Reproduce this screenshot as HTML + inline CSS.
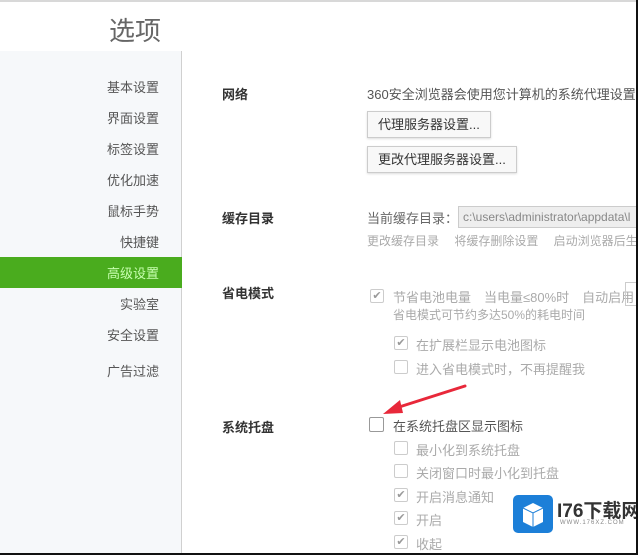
<!DOCTYPE html>
<html><head><meta charset="utf-8"><style>
*{margin:0;padding:0;box-sizing:border-box}
body{width:638px;height:555px;overflow:hidden;background:#fff;font-family:"Liberation Sans","Noto Sans CJK SC",sans-serif;position:relative;color:#333}
.a{position:absolute;white-space:nowrap}
.top{left:0;top:0;width:638px;height:3px;border-top:2px solid #d8d8d8}
.title{left:109px;top:11px;font-size:26px;color:#666}
.side{left:0;top:51px;width:182px;height:502px;background:#f6f8fa;border-right:1px solid #d0d0d0}
.nav{left:0;width:159px;text-align:right;font-size:13px;color:#555}
.sel{left:0;top:257px;width:182px;height:31px;background:#4aac1e}
.h{font-size:13px;font-weight:bold;color:#333;left:222px}
.t{font-size:13px;color:#444}
.f{color:#aaa;font-size:12px}
.btn{border:1px solid #ccc;background:#f8f8f8;font-size:13px;padding:0 10px;height:27px;line-height:26px;color:#333;box-shadow:0 1px 2px #ddd}
.cb{width:14px;height:14px;border:1px solid #ccc;border-radius:2px;background:#fff;font-size:11px;line-height:12px;text-align:center;color:#999}
</style></head><body>
<div class="a top"></div>
<div class="a title">选项</div>
<div class="a side"></div>
<div class="a nav" style="top:77px">基本设置</div>
<div class="a nav" style="top:108px">界面设置</div>
<div class="a nav" style="top:139px">标签设置</div>
<div class="a nav" style="top:170px">优化加速</div>
<div class="a nav" style="top:201px">鼠标手势</div>
<div class="a nav" style="top:232px">快捷键</div>
<div class="a sel"></div>
<div class="a nav" style="top:263px;color:#c8ffb0">高级设置</div>
<div class="a nav" style="top:294px">实验室</div>
<div class="a nav" style="top:325px">安全设置</div>
<div class="a nav" style="top:361px">广告过滤</div>

<div class="a h" style="top:84px">网络</div>
<div class="a t" style="left:367px;top:84px;color:#555">360安全浏览器会使用您计算机的系统代理设置连</div>
<div class="a btn" style="left:367px;top:111px">代理服务器设置...</div>
<div class="a btn" style="left:367px;top:146px">更改代理服务器设置...</div>

<div class="a h" style="top:208px">缓存目录</div>
<div class="a t" style="left:367px;top:208px;color:#666">当前缓存目录：</div>
<div class="a" style="left:458px;top:206px;width:180px;height:22px;border:1px solid #ccc;background:#eee;font-size:12px;line-height:20px;color:#888;padding-left:4px">c:\users\administrator\appdata\l</div>
<div class="a f" style="left:367px;top:232px">更改缓存目录　 将缓存删除设置　 启动浏览器后生成</div>

<div class="a h" style="top:283px">省电模式</div>
<div class="a cb" style="left:370px;top:289px">✔</div>
<div class="a f" style="left:393px;top:287px;font-size:13px">节省电池电量　当电量≤80%时　自动启用</div>
<div class="a" style="left:625px;top:282px;width:14px;height:24px;border:1px solid #ccc"></div>
<div class="a f" style="left:393px;top:306px">省电模式可节约多达50%的耗电时间</div>
<div class="a cb" style="left:394px;top:336px">✔</div>
<div class="a f" style="left:416px;top:335px;font-size:13px">在扩展栏显示电池图标</div>
<div class="a cb" style="left:394px;top:360px"></div>
<div class="a f" style="left:416px;top:359px;font-size:13px">进入省电模式时，不再提醒我</div>

<div class="a h" style="top:417px">系统托盘</div>
<div class="a cb" style="left:369px;top:417px;width:15px;height:15px;border-color:#999"></div>
<div class="a t" style="left:393px;top:416px;color:#555">在系统托盘区显示图标</div>
<div class="a cb" style="left:394px;top:441px"></div>
<div class="a f" style="left:416px;top:440px;font-size:13px">最小化到系统托盘</div>
<div class="a cb" style="left:394px;top:464px"></div>
<div class="a f" style="left:416px;top:463px;font-size:13px">关闭窗口时最小化到托盘</div>
<div class="a cb" style="left:394px;top:488px">✔</div>
<div class="a f" style="left:416px;top:487px;font-size:13px">开启消息通知</div>
<div class="a cb" style="left:394px;top:511px">✔</div>
<div class="a f" style="left:416px;top:510px;font-size:13px">开启</div>
<div class="a cb" style="left:394px;top:535px">✔</div>
<div class="a f" style="left:416px;top:534px;font-size:13px">收起</div>

<svg class="a" style="left:0;top:0" width="638" height="555">
<path d="M465 386 L396 408" stroke="#e8283a" stroke-width="3" stroke-linecap="round"/>
<path d="M383 414 L400 400 L403 413 Z" fill="#e8283a"/>
<rect x="513" y="495" width="40" height="38" rx="5" fill="#1c7fd8"/>
<path d="M523 508 L533 503 L543 508 L543 522 L533 527 L523 522 Z" fill="#fff"/>
<path d="M533 513 L533 527 M523 508 L533 513 L543 508" stroke="#1c7fd8" stroke-width="1" fill="none"/>
</svg>
<div class="a" style="left:557px;top:496px;font-size:19px;font-weight:bold;color:#333">I76下载网</div>
<div class="a" style="left:560px;top:520px;font-size:6px;color:#888;letter-spacing:1px">WWW.176XZ.COM</div>

<div class="a" style="left:636px;top:0;width:2px;height:555px;background:#111"></div>
<div class="a" style="left:0;top:553px;width:638px;height:2px;background:#111"></div>
</body></html>
